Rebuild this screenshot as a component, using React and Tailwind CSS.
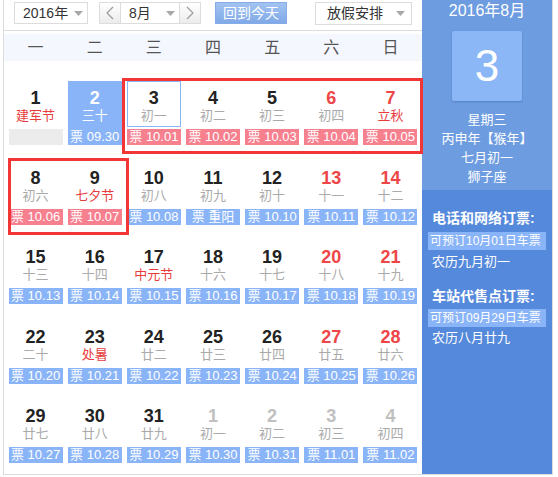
import React from 'react';

const rows = [
  [
    { n: '1', l: '建军节', fest: true, blank: true },
    { n: '2', l: '三十', t: '09.30', sel: true },
    { n: '3', l: '初一', t: '10.01', hot: true, today: true },
    { n: '4', l: '初二', t: '10.02', hot: true },
    { n: '5', l: '初三', t: '10.03', hot: true },
    { n: '6', l: '初四', t: '10.04', hot: true, wk: true },
    { n: '7', l: '立秋', t: '10.05', hot: true, wk: true, fest: true },
  ],
  [
    { n: '8', l: '初六', t: '10.06', hot: true },
    { n: '9', l: '七夕节', t: '10.07', hot: true, fest: true },
    { n: '10', l: '初八', t: '10.08' },
    { n: '11', l: '初九', t: '重阳' },
    { n: '12', l: '初十', t: '10.10' },
    { n: '13', l: '十一', t: '10.11', wk: true },
    { n: '14', l: '十二', t: '10.12', wk: true },
  ],
  [
    { n: '15', l: '十三', t: '10.13' },
    { n: '16', l: '十四', t: '10.14' },
    { n: '17', l: '中元节', t: '10.15', fest: true },
    { n: '18', l: '十六', t: '10.16' },
    { n: '19', l: '十七', t: '10.17' },
    { n: '20', l: '十八', t: '10.18', wk: true },
    { n: '21', l: '十九', t: '10.19', wk: true },
  ],
  [
    { n: '22', l: '二十', t: '10.20' },
    { n: '23', l: '处暑', t: '10.21', fest: true },
    { n: '24', l: '廿二', t: '10.22' },
    { n: '25', l: '廿三', t: '10.23' },
    { n: '26', l: '廿四', t: '10.24' },
    { n: '27', l: '廿五', t: '10.25', wk: true },
    { n: '28', l: '廿六', t: '10.26', wk: true },
  ],
  [
    { n: '29', l: '廿七', t: '10.27' },
    { n: '30', l: '廿八', t: '10.28' },
    { n: '31', l: '廿九', t: '10.29' },
    { n: '1', l: '初一', t: '10.30', other: true },
    { n: '2', l: '初二', t: '10.31', other: true },
    { n: '3', l: '初三', t: '11.01', other: true },
    { n: '4', l: '初四', t: '11.02', other: true },
  ],
];

const weekdays = ['一', '二', '三', '四', '五', '六', '日'];

const Caret = () => (
  <svg width="9" height="5" viewBox="0 0 9 5">
    <polygon points="0,0 9,0 4.5,5" fill="#a8a8a8" />
  </svg>
);

const Chevron = ({ dir }) => (
  <svg width="8" height="14" viewBox="0 0 8 14">
    <polyline
      points={dir === 'left' ? '7,1 1,7 7,13' : '1,1 7,7 1,13'}
      fill="none"
      stroke="#9a9a9a"
      strokeWidth="1.2"
    />
  </svg>
);

const Cell = ({ c }) => {
  let numColor = 'text-[#222]';
  if (c.wk) numColor = 'text-[#ee4646]';
  if (c.other) numColor = 'text-[#c0c0c0]';
  if (c.sel) numColor = 'text-white';

  let lunarColor = 'text-[#aaa]';
  if (c.fest) lunarColor = 'text-[#e83c3c]';
  if (c.sel) lunarColor = 'text-white';

  return (
    <div className="flex justify-center">
      <div className={`relative w-[54px] h-[64px] flex flex-col items-center pt-[8px] ${c.sel ? 'bg-[#8ab4f8]' : ''}`}>
        {c.today && <div className="absolute left-0 top-0 w-[54px] h-[46px] border border-[#8ab4f8]" />}
        <div className={`text-[18px] leading-[18px] font-bold ${numColor}`}>{c.n}</div>
        <div className={`text-[13px] leading-[18px] ${lunarColor}`}>{c.l}</div>
        {c.blank ? (
          <div className="mt-[4px] w-[54px] h-[16px] bg-[#ececec]" />
        ) : (
          <div
            className={`mt-[4px] w-[54px] h-[16px] text-[13px] leading-[16px] text-white text-center whitespace-nowrap ${
              c.hot ? 'bg-[#f7808f]' : 'bg-[#8ab4f8]'
            }`}
          >
            票 {c.t}
          </div>
        )}
      </div>
    </div>
  );
};

export default function App() {
  return (
    <div className="w-[558px] h-[477px] bg-white font-['Liberation_Sans','Noto_Sans_CJK_SC',sans-serif] overflow-hidden">
      <div className="ml-[3px] w-[550px] h-[475px] flex border-l border-r border-b border-[#dcdcdc]">
        {/* calendar side */}
        <div className="w-[418px] flex flex-col">
          <div className="h-[31px] flex items-start pt-[2px] pl-[10px] border-b border-[#dcdcdc]">
            <div className="w-[74px] h-[22px] border border-[#dcdcdc] flex items-center justify-between pl-[8px] pr-[4px] text-[14px] text-[#333]">
              <span>2016年</span>
              <Caret />
            </div>
            <div className="ml-[11px] h-[22px] flex border border-[#dcdcdc]">
              <div className="w-[21px] flex items-center justify-center bg-gradient-to-b from-white to-[#ececec] border-r border-[#dcdcdc]">
                <Chevron dir="left" />
              </div>
              <div className="w-[58px] flex items-center justify-between pl-[8px] pr-[4px] text-[14px] text-[#333]">
                <span>8月</span>
                <Caret />
              </div>
              <div className="w-[21px] flex items-center justify-center bg-gradient-to-b from-white to-[#ececec] border-l border-[#dcdcdc]">
                <Chevron dir="right" />
              </div>
            </div>
            <div className="ml-[14px] w-[72px] h-[22px] flex items-center justify-center text-[14px] text-white bg-gradient-to-b from-[#a2c3f1] to-[#80a9e7] border border-[#85ace6]">
              回到今天
            </div>
            <div className="ml-[28px] w-[97px] h-[23px] border border-[#dcdcdc] flex items-center justify-between pl-[11px] pr-[6px] text-[14px] text-[#333]">
              <span>放假安排</span>
              <Caret />
            </div>
          </div>

          <div className="mt-[3px] h-[27px] bg-[#f4f7fe]">
            <div className="ml-[2px] w-[414px] h-full grid grid-cols-7 items-center text-center text-[16px] text-[#555]">
              {weekdays.map((w) => (
                <div key={w}>{w}</div>
              ))}
            </div>
          </div>

          <div className="relative ml-[2px] w-[414px] pt-[20px] flex flex-col gap-y-[15.5px]">
            {rows.map((r, i) => (
              <div key={i} className="grid grid-cols-7">
                {r.map((c, j) => (
                  <Cell key={j} c={c} />
                ))}
              </div>
            ))}
            <div className="absolute left-[116px] top-[17px] w-[301px] h-[76px] border-[3px] border-[#f23535]" />
            <div className="absolute left-[2px] top-[97px] w-[121px] h-[77px] border-[3px] border-[#f23535]" />
          </div>
        </div>

        {/* info panel */}
        <div className="w-[130px] flex flex-col text-white">
          <div className="h-[190px] bg-[#6d9ce0] flex flex-col items-center">
            <div className="pt-[1px] text-[16px] leading-[20px]">2016年8月</div>
            <div className="mt-[10px] w-[70px] h-[70px] rounded-[2px] bg-[#8bb7f6] shadow-[0_1px_2px_rgba(40,80,150,0.35)] flex items-center justify-center text-[44px] leading-none">
              3
            </div>
            <div className="mt-[9px] text-[13px] leading-[19px] text-center">
              <div>星期三</div>
              <div>丙申年【猴年】</div>
              <div>七月初一</div>
              <div>狮子座</div>
            </div>
          </div>
          <div className="flex-1 bg-[#5589db] pt-[18px]">
            <div className="pl-[10px] text-[14px] leading-[20px] font-bold">电话和网络订票:</div>
            <div className="mt-[4px] ml-[6px] w-[118px] h-[18px] bg-[#8ab4f8] pl-[2px] text-[12px] leading-[18px] whitespace-nowrap overflow-hidden">
              可预订10月01日车票
            </div>
            <div className="mt-[2px] pl-[10px] text-[13px] leading-[20px]">农历九月初一</div>
            <div className="mt-[14px] pl-[10px] text-[14px] leading-[20px] font-bold">车站代售点订票:</div>
            <div className="mt-[3px] ml-[6px] w-[118px] h-[18px] bg-[#8ab4f8] pl-[2px] text-[12px] leading-[18px] whitespace-nowrap overflow-hidden">
              可预订09月29日车票
            </div>
            <div className="mt-[1px] pl-[10px] text-[13px] leading-[20px]">农历八月廿九</div>
          </div>
        </div>
      </div>
    </div>
  );
}
